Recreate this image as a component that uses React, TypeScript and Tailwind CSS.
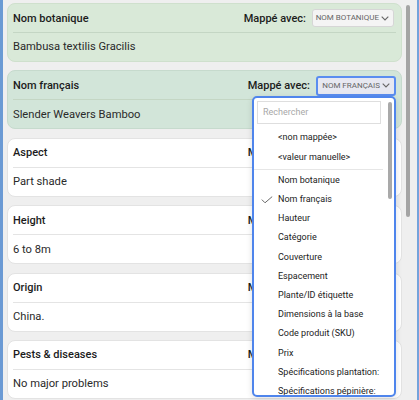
import React from "react";

type Card = {
  title: string;
  value: string;
  sel: string;
  selW: string;
  tone: "g1" | "g2" | "w";
};

const cards: Card[] = [
  { title: "Nom botanique", value: "Bambusa textilis Gracilis", sel: "NOM BOTANIQUE", selW: "w-[82px]", tone: "g1" },
  { title: "Nom français", value: "Slender Weavers Bamboo", sel: "NOM FRANÇAIS", selW: "w-[80px]", tone: "g2" },
  { title: "Aspect", value: "Part shade", sel: "", selW: "w-[78px]", tone: "w" },
  { title: "Height", value: "6 to 8m", sel: "", selW: "w-[78px]", tone: "w" },
  { title: "Origin", value: "China.", sel: "", selW: "w-[78px]", tone: "w" },
  { title: "Pests & diseases", value: "No major problems", sel: "", selW: "w-[78px]", tone: "w" },
];

const items = [
  "Nom botanique",
  "Nom français",
  "Hauteur",
  "Catégorie",
  "Couverture",
  "Espacement",
  "Plante/ID étiquette",
  "Dimensions à la base",
  "Code produit (SKU)",
  "Prix",
  "Spécifications plantation:",
  "Spécifications pépinière:",
];

function Chevron() {
  return (
    <svg width="8" height="5" viewBox="0 0 8 5" className="shrink-0">
      <polyline points="0.7,0.7 4,4 7.3,0.7" fill="none" stroke="#666" strokeWidth="1.1" />
    </svg>
  );
}

function CardView({ c }: { c: Card }) {
  const cardCls =
    c.tone === "g1"
      ? "bg-[#d9e9d8] border-[#cfe0cd]"
      : c.tone === "g2"
      ? "bg-[#d2e5d9] border-[#c6dacd]"
      : "bg-white border-[#e3e3e3]";
  const sepCls = c.tone === "w" ? "border-[#e4e4e4]" : "border-[#c4d6c4]";
  const focused = c.tone === "g2";
  return (
    <div className={`h-[59px] shrink-0 rounded-[8px] border px-[5px] flex flex-col ${cardCls}`}>
      <div className={`h-[29px] shrink-0 flex items-center justify-between border-b ${sepCls}`}>
        <span className="text-[11px] font-medium text-[#1c1c1c] leading-none">{c.title}</span>
        <div className={`flex items-center gap-[6px] ${focused ? "" : "mr-[2px]"}`}>
          <span className="text-[11px] font-medium text-[#1c1c1c] leading-none">
            {c.tone === "w" ? "M" : "Mappé avec:"}
            {c.tone === "w" && <span className="invisible">appé avec:</span>}
          </span>
          {focused ? (
            <div className={`${c.selW} h-[20px] mt-[1px] rounded-[3px] border-2 border-[#5a8df0] bg-[#e7e8f1] flex items-center justify-end gap-[2px] pr-[4px]`}>
              <span className="text-[8px] text-[#666] leading-none whitespace-nowrap">{c.sel}</span>
              <Chevron />
            </div>
          ) : (
            <div className={`${c.selW} h-[18px] rounded-[3px] border border-[#d6d6d6] bg-[#f4f4f4] flex items-center justify-end gap-[2px] pr-[4px]`}>
              <span className="text-[8px] text-[#666] leading-none whitespace-nowrap">{c.sel}</span>
              <Chevron />
            </div>
          )}
        </div>
      </div>
      <div className="flex-1 flex items-center">
        <span className="text-[11.2px] text-[#2a2a2a] leading-none">{c.value}</span>
      </div>
    </div>
  );
}

export default function App() {
  return (
    <div
      className="relative w-[419px] h-[400px] overflow-hidden bg-[#efefef] flex"
      style={{ fontFamily: "Roboto, 'Noto Sans', sans-serif" }}
    >
      <div className="w-[3px] shrink-0 bg-[#6b9ad4]" />
      <div className="w-[399px] shrink-0 pl-[4px] pt-[3px] flex flex-col gap-[8.4px]">
        {cards.map((c) => (
          <CardView key={c.title} c={c} />
        ))}
      </div>
      <div className="w-[15px] shrink-0 pl-[4px] pt-[5px]">
        <div className="w-[4px] h-[212px] rounded-full bg-[#a4a4a4]" />
      </div>
      <div className="w-[2px] shrink-0 bg-[#74a3dc]" />

      {/* Dropdown */}
      <div className="absolute left-[252px] top-[96px] w-[144px] h-[301px] rounded-[5px] border-2 border-[#4f85ec] bg-white overflow-hidden shadow-[0_2px_6px_rgba(0,0,0,0.12)]">
        <div className="pt-[3px] pl-[3px]">
          <div className="w-[124px] h-[23px] border border-[#dedede] flex items-center pl-[5px]">
            <span className="text-[9px] text-[#a8a8a8] leading-none">Rechercher</span>
          </div>
        </div>
        <div className="mt-[4.4px]">
          <div className="h-[19.2px] flex items-center pl-[24px] text-[9px] text-[#222] leading-none">&lt;non mappée&gt;</div>
          <div className="h-[19.2px] flex items-center pl-[24px] text-[9px] text-[#222] leading-none">&lt;valeur manuelle&gt;</div>
          <div className="mt-[2px] mb-[1px] mr-[11px] h-px bg-[#e6e6e6]" />
          {items.map((it) => (
            <div key={it} className="relative h-[19.2px] flex items-center pl-[24px] text-[9px] text-[#222] leading-none whitespace-nowrap">
              {it === "Nom français" && (
                <svg className="absolute left-[7px] top-[6px]" width="12" height="8" viewBox="0 0 12 8">
                  <polyline points="0.8,3.6 4,6.8 11.2,0.6" fill="none" stroke="#6a6a6a" strokeWidth="1" />
                </svg>
              )}
              {it}
            </div>
          ))}
        </div>
        <div className="absolute left-[134px] top-[4px] w-[4px] h-[97px] rounded-full bg-[#a9a9a9]" />
      </div>
    </div>
  );
}
